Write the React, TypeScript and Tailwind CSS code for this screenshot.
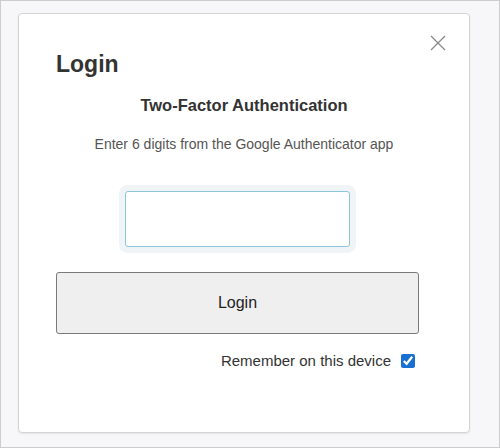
import { useState } from 'react'

export default function App() {
  const [code, setCode] = useState('')
  const [remember, setRemember] = useState(true)

  return (
    <div
      className="w-[500px] h-[448px] border border-[#cdcdcd] bg-[#f7f7f9] pt-[12px] pl-[17px]"
      style={{ fontFamily: '"Liberation Sans", Arial, sans-serif' }}
    >
      {/* card */}
      <div className="relative w-[452px] h-[420px] bg-white border border-[#d4d4d4] rounded-[4px] shadow-[0_1px_2px_rgba(0,0,0,0.08)] pt-[36px]">
        <button className="absolute top-[21px] right-[23px] w-[16px] h-[16px] text-[#8a8a8a]" aria-label="Close">
          <svg viewBox="0 0 16 16" className="w-[16px] h-[16px]" fill="none" stroke="currentColor" strokeWidth={1.3}>
            <path d="M1 1l14 14M15 1L1 15" />
          </svg>
        </button>

        <h1 className="pl-[37px] text-[23px] leading-[28px] font-bold text-[#333]">Login</h1>

        <h2 className="mt-[17px] text-center text-[16.5px] leading-[20px] font-bold text-[#333]">
          Two-Factor Authentication
        </h2>

        <p className="mt-[19px] text-center text-[14px] leading-[20px] text-[#555]">
          Enter 6 digits from the Google Authenticator app
        </p>

        <div className="ml-[37px] w-[362px]">
          <div className="mt-[37px] flex justify-center">
            <input
              value={code}
              onChange={(e) => setCode(e.target.value)}
              inputMode="numeric"
              maxLength={6}
              className="w-[225px] h-[56px] border border-[#8cc6da] rounded-[3px] bg-white shadow-[0_0_0_6px_#f1f4f7] outline-none text-center text-[20px] text-[#333]"
            />
          </div>

          <button className="mt-[25px] w-[363px] h-[62px] bg-[#efefef] border border-[#7a7a7a] rounded-[3px] text-[16px] text-[#222]">
            Login
          </button>

          <label className="mt-[17px] flex items-center justify-end pr-[3px] text-[15px] leading-[20px] text-[#333]">
            <span>Remember on this device</span>
            <input
              type="checkbox"
              checked={remember}
              onChange={(e) => setRemember(e.target.checked)}
              className="ml-[10px] w-[14px] h-[14px] accent-[#1a6fd3]"
            />
          </label>
        </div>
      </div>
    </div>
  )
}
